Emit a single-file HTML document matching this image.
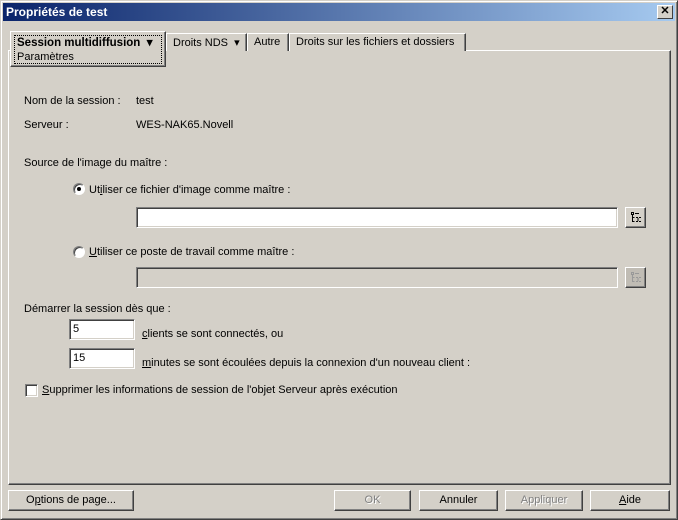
<!DOCTYPE html>
<html><head><meta charset="utf-8"><style>
*{box-sizing:border-box}
body{margin:0;width:678px;height:520px;background:#d4d0c8;font-family:"Liberation Sans",Arial,sans-serif;font-size:11px;color:#000;position:relative;overflow:hidden}
.win{position:absolute;left:0;top:0;width:678px;height:520px;border:1px solid;border-color:#d4d0c8 #404040 #404040 #d4d0c8;box-shadow:inset 1px 1px #fff,inset -1px -1px #808080}
.title{position:absolute;left:3px;top:3px;width:672px;height:18px;background:linear-gradient(to right,#0a246a,#a6caf0);color:#fff;font-weight:bold;font-size:12px;line-height:18px;padding-left:3px}
.close{position:absolute;right:2px;top:2px;width:16px;height:14px;background:#d4d0c8;border:1px solid;border-color:#fff #404040 #404040 #fff;color:#000;font-size:11px;line-height:11px;text-align:center;font-weight:bold}
.a{position:absolute;white-space:nowrap}
.panel{position:absolute;left:8px;top:50px;width:663px;height:435px;border:1px solid;border-color:#fff #404040 #404040 #fff;box-shadow:inset -1px -1px #808080}
.tab{position:absolute;top:33px;height:18px;border:1px solid;border-bottom:none;border-color:#fff #404040 #404040 #fff;box-shadow:inset -1px 0 #808080;padding:2px 6px 0;white-space:nowrap;background:#d4d0c8}
.sel{position:absolute;left:10px;top:31px;width:156px;height:36px;border:1px solid;border-color:#fff #404040 #404040 #fff;box-shadow:inset -1px -1px #808080;background:#d4d0c8;z-index:2}
.field{position:absolute;border:1px solid;border-color:#808080 #fff #fff #808080;box-shadow:inset 1px 1px #404040,inset -1px -1px #d4d0c8;background:#fff;padding:3px 3px;font-size:11px}
.btn{position:absolute;height:21px;border:1px solid;border-color:#fff #404040 #404040 #fff;box-shadow:inset -1px -1px #808080;text-align:center;line-height:18px}
.dis{color:#808080;text-shadow:1px 1px #fff}
.radio{position:absolute;width:12px;height:12px;border-radius:50%;background:#fff;border:1px solid;border-color:#808080 #fff #fff #808080;box-shadow:inset 1px 1px #404040}
u{text-decoration:underline}
svg{position:absolute;left:5px;top:4px}
</style></head><body>
<div class="win"></div>
<div class="title">Propriétés de test<div class="close">✕</div></div>

<div class="panel"></div>
<div class="sel"><div style="position:absolute;left:3px;top:3px;width:148px;height:29px;border:1px dotted #000"></div>
<div class="a" style="left:6px;top:3px;font-weight:bold;font-size:11.5px">Session multidiffusion &nbsp;▾</div>
<div class="a" style="left:6px;top:19px">Paramètres</div></div>
<div class="tab" style="left:166px;width:81px">Droits NDS &nbsp;▾</div>
<div class="tab" style="left:247px;width:42px">Autre</div>
<div class="tab" style="left:289px;width:177px">Droits sur les fichiers et dossiers</div>

<div class="a" style="left:24px;top:95px">Nom de la session :</div>
<div class="a" style="left:136px;top:95px">test</div>
<div class="a" style="left:24px;top:119px">Serveur :</div>
<div class="a" style="left:136px;top:119px">WES-NAK65.Novell</div>
<div class="a" style="left:24px;top:157px">Source de l'image du maître :</div>

<div class="radio" style="left:73px;top:183px"><div style="position:absolute;left:3px;top:3px;width:4px;height:4px;border-radius:50%;background:#000"></div></div>
<div class="a" style="left:89px;top:184px">Ut<u>i</u>liser ce fichier d'image comme maître :</div>
<div class="field" style="left:136px;top:207px;width:482px;height:21px"></div>
<div class="btn" style="left:625px;top:207px;width:21px;height:21px"><svg width="11" height="11" viewBox="0 0 11 11" fill="none" stroke="#000" stroke-width="1"><rect x="0.5" y="0.5" width="2" height="2"/><path d="M4 1.5h4M1.5 3v7M1.5 5.5h2M1.5 9.5h2M5 5.5h2M5 9.5h2M8 5.5h2M8 9.5h2M7 6v3"/></svg></div>

<div class="radio" style="left:73px;top:246px"></div>
<div class="a" style="left:89px;top:246px"><u>U</u>tiliser ce poste de travail comme maître :</div>
<div class="field" style="left:136px;top:267px;width:482px;height:21px;background:#d4d0c8"></div>
<div class="btn" style="left:625px;top:267px;width:21px;height:21px;background:#c0bcb4"><svg width="11" height="11" viewBox="0 0 11 11" fill="none" stroke="#999" stroke-width="1"><rect x="0.5" y="0.5" width="2" height="2"/><path d="M4 1.5h4M1.5 3v7M1.5 5.5h2M1.5 9.5h2M5 5.5h2M5 9.5h2M8 5.5h2M8 9.5h2M7 6v3"/></svg></div>

<div class="a" style="left:24px;top:303px">Démarrer la session dès que :</div>
<div class="field" style="left:69px;top:319px;width:66px;height:21px">5</div>
<div class="a" style="left:142px;top:328px"><u>c</u>lients se sont connectés, ou</div>
<div class="field" style="left:69px;top:348px;width:66px;height:21px">15</div>
<div class="a" style="left:142px;top:357px"><u>m</u>inutes se sont écoulées depuis la connexion d'un nouveau client :</div>

<div class="field" style="left:25px;top:384px;width:13px;height:13px;padding:0"></div>
<div class="a" style="left:42px;top:384px"><u>S</u>upprimer les informations de session de l'objet Serveur après exécution</div>

<div class="btn" style="left:8px;top:490px;width:126px">O<u>p</u>tions de page...</div>
<div class="btn dis" style="left:334px;top:490px;width:77px">OK</div>
<div class="btn" style="left:419px;top:490px;width:79px">Annuler</div>
<div class="btn dis" style="left:505px;top:490px;width:78px">Appliquer</div>
<div class="btn" style="left:590px;top:490px;width:80px"><u>A</u>ide</div>
</body></html>
